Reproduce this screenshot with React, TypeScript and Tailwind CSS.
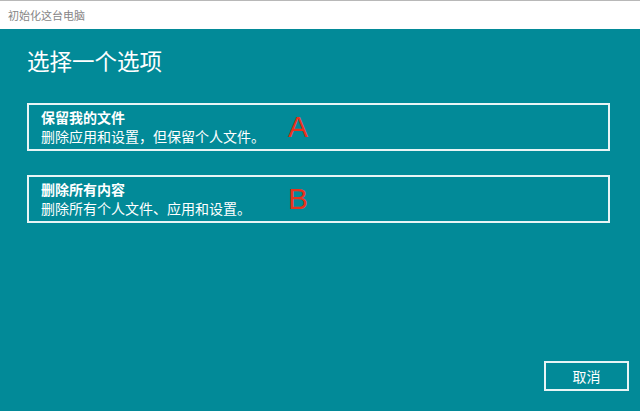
const cjk = '"Noto Sans CJK SC", "Microsoft YaHei", sans-serif';

function OptionBox({ title, desc, mark }: { title: string; desc: string; mark: string }) {
    return (
        <div className="flex h-[48px] w-[583px] items-center border-2 border-[#e8f4f5] pl-[12px]">
            <div className="w-[247px] leading-[19px]">
                <div className="text-[14px] font-bold text-white">{title}</div>
                <div className="text-[14px] text-white">{desc}</div>
            </div>
            <span
                className="text-[30px] leading-none text-[#e8321c]"
                style={{ fontFamily: '"Liberation Sans", Arial, sans-serif' }}
            >
                {mark}
            </span>
        </div>
    );
}

export default function App() {
    return (
        <div className="flex h-[411px] w-[640px] flex-col overflow-hidden" style={{ fontFamily: cjk }}>
            <div className="flex h-[29px] items-center border-t border-[#b8b8b8] bg-white pl-[8px] text-[11px] text-[#858585]">
                初始化这台电脑
            </div>
            <div className="flex flex-1 flex-col bg-[#028a98] pl-[27px]">
                <h1 className="mt-[16px] text-[22.5px] font-normal leading-[30px] text-white">选择一个选项</h1>
                <div className="mt-[28px] flex flex-col gap-[24px]">
                    <OptionBox title="保留我的文件" desc="删除应用和设置，但保留个人文件。" mark="A" />
                    <OptionBox title="删除所有内容" desc="删除所有个人文件、应用和设置。" mark="B" />
                </div>
                <div className="mt-auto mb-[20px] flex justify-end pr-[11px]">
                    <button className="h-[30px] w-[85px] border-2 border-[#e8f4f5] text-[14px] text-white">
                        取消
                    </button>
                </div>
            </div>
        </div>
    );
}
